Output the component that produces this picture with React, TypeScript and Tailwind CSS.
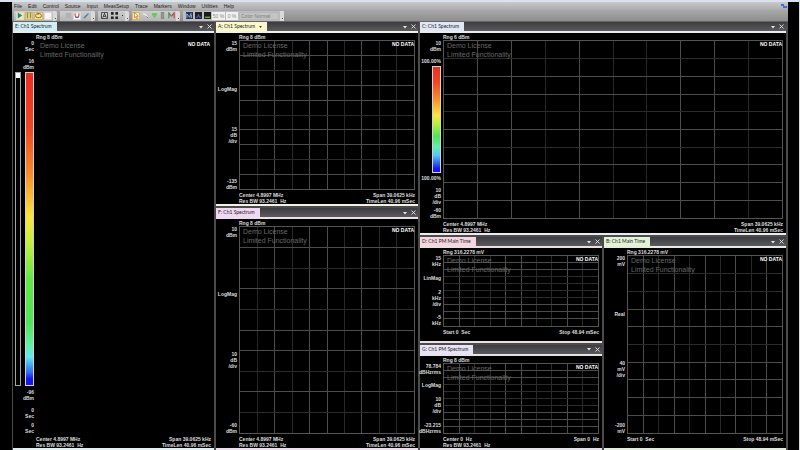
import type { ReactNode } from "react";

type Lines = string[];

function Label({ lines }: { lines: Lines }) {
  return (
    <div className="flex flex-col items-end">
      {lines.map((line, i) => (
        <span key={i}>{line}</span>
      ))}
    </div>
  );
}

function Graticule({ vBright, hBright }: { vBright: number[]; hBright: number[] }) {
  const ticks = [1, 2, 3, 4, 5, 6, 7, 8, 9];
  return (
    <svg className="block size-full" shapeRendering="crispEdges" aria-hidden="true">
      {ticks.map((t) => (
        <line key={"v" + t} x1={t * 10 + "%"} x2={t * 10 + "%"} y1="0" y2="100%" stroke={vBright.includes(t) ? "#4c4c4a" : "#292929"} />
      ))}
      {ticks.map((t) => (
        <line key={"h" + t} y1={t * 10 + "%"} y2={t * 10 + "%"} x1="0" x2="100%" stroke={hBright.includes(t) ? "#4c4c4a" : "#2c2c2a"} />
      ))}
    </svg>
  );
}

interface PanelProps {
  title: string;
  tab: string;
  line: string;
  range: string;
  gutter: ReactNode;
  footer: [string, string][];
  vBright?: number[];
  hBright?: number[];
  grid?: boolean;
  active?: boolean;
  className?: string;
}

function Panel({ title, tab, line, range, gutter, footer, vBright = [], hBright = [], grid = true, active, className = "" }: PanelProps) {
  return (
    <section className={"flex min-h-0 min-w-0 flex-col bg-black " + className}>
      <header className={"flex h-[11px] shrink-0 items-stretch justify-between border-b-2 bg-linear-to-b from-[#3c3c40] to-[#5b5b5e] " + line}>
        <h2 className={"flex items-center gap-1 px-[2px] pr-[5px] font-['Lato',sans-serif] text-[5px] leading-[9px] whitespace-pre text-[#222] " + tab}>
          {title}
          {active && (
            <svg viewBox="0 0 4 3" className="h-[2px] w-[3px]" fill="#333"><path d="M0 0h4L2 3z" /></svg>
          )}
        </h2>
        <div className="flex items-center gap-1 pr-[2px] text-[#e8e8e8]">
          <button aria-label={"Menu " + title} className="flex">
            <svg viewBox="0 0 4 4" className="size-[4px]" fill="currentColor"><path d="M0 1h4L2 3.4z" /></svg>
          </button>
          <button aria-label={"Close " + title} className="flex">
            <svg viewBox="0 0 5 5" className="size-[5px]" stroke="currentColor" strokeWidth="0.9"><path d="M.5.5l4 4M4.5.5l-4 4" /></svg>
          </button>
        </div>
      </header>
      <div className="flex min-h-0 flex-1 text-[5px] leading-[6px] font-bold whitespace-pre text-[#dedede]">
        <div className="flex w-[23px] shrink-0 flex-col items-end justify-between pt-[7px] pr-[2px] pb-[14px]">{gutter}</div>
        <div className="flex min-w-0 flex-1 flex-col pr-[3px]">
          <div className="h-[7px] shrink-0 leading-[8px]">{range}</div>
          <div className={"relative min-h-0 flex-1 " + (grid ? "border border-[#545454]" : "border border-black")}>
            {grid && <Graticule vBright={vBright} hBright={hBright} />}
            <p className="absolute top-0 left-[3px] text-[7px] leading-[9px] font-normal text-[#686868]">
              Demo License
              <br />
              Limited Functionality
            </p>
            <p className="absolute top-0 right-0 leading-[7px] text-white">NO DATA</p>
          </div>
          <footer className="h-[14px] shrink-0 pt-[2px]">
            {footer.map(([left, right]) => (
              <div key={left} className="flex justify-between">
                <span>{left}</span>
                <span>{right}</span>
              </div>
            ))}
          </footer>
        </div>
      </div>
      <div className={"shrink-0 border-b-2 " + line} />
    </section>
  );
}

const spectrumFooter: [string, string][] = [
  ["Center 4.8997 MHz", "Span 39.0625 kHz"],
  ["Res BW 93.2461  Hz", "TimeLen 40.96 mSec"],
];
const timeFooter: [string, string][] = [["Start 0  Sec", "Stop 48.94 mSec"]];

function stack(...groups: Lines[]) {
  return groups.map((g, i) => <Label key={i} lines={g} />);
}

const menus = ["File", "Edit", "Control", "Source", "Input", "MeasSetup", "Trace", "Markers", "Window", "Utilities", "Help"];

function Tool({ name, hot, width = "w-[8px]", children }: { name: string; hot?: string; width?: string; children: ReactNode }) {
  return (
    <button aria-label={name} className={"flex h-[8px] items-center justify-center " + width + " " + (hot ?? "")}>
      <svg viewBox="0 0 8 8" className="size-[7px]" fill="none">
        {children}
      </svg>
    </button>
  );
}

function ToolGroup({ pad = "pl-[2px]", children }: { pad?: string; children: ReactNode }) {
  return (
    <div className={"flex h-[10px] items-center gap-px rounded-r-[2px] bg-linear-to-b from-[#cdcdcd] to-[#b4b4b4] " + pad}>
      {children}
      <span className="flex h-full w-[4px] items-end justify-center rounded-r-[2px] bg-[#dadada] pb-[2px]">
        <i className="size-[1px] bg-[#555]" />
      </span>
    </div>
  );
}

const hotYellow = "border border-[#d9b860] bg-[#fbe6a0]";
const white = "border border-[#d8d8d8] bg-[#f7f7f7]";

function Toolbar() {
  return (
    <div className="flex h-[12px] shrink-0 items-center gap-[3px] border-b border-[#666] bg-linear-to-b from-[#a8a8a8] to-[#8e8e8e] px-[2px] font-['Liberation_Sans',Arial,sans-serif]">
      <ToolGroup>
        <Tool name="Run" hot="border border-[#e5dcae] bg-[#eee7b8]"><path d="M1 0l6 4-6 4z" fill="#237d9c" /></Tool>
        <Tool name="Pause" hot={hotYellow}><path d="M1 0h2v8H1zM5 0h2v8H5z" fill="#8b8746" /></Tool>
        <Tool name="Repeat" width="w-[9px]" hot={hotYellow}><rect x="0.7" y="2" width="6.6" height="4.4" rx="2" stroke="#806828" strokeWidth="1.1" /><path d="M3 .5L5 2 3 3.5z" fill="#806828" /></Tool>
        <Tool name="Single" hot={white}><path d="M6 6h1v1H6z" fill="#bbb" /></Tool>
      </ToolGroup>
      <ToolGroup pad="pl-[4px]">
        <Tool name="Record"><rect x="1" y="1" width="6" height="6" fill="#b2b2b2" /></Tool>
        <Tool name="Snap" hot={white}><path d="M1.5 1v3a2.5 2.5 0 005 0V1" stroke="#d44a58" strokeWidth="1.6" /><path d="M2 6.5h4" stroke="#3c65bb" strokeWidth="1.5" /></Tool>
        <Tool name="Calibrate"><path d="M1 7L6 2" stroke="#3a78a8" strokeWidth="1.6" /><path d="M5 1h2v2H5z" fill="#69b6df" /></Tool>
      </ToolGroup>
      <ToolGroup>
        <Tool name="Auto scale" width="w-[9px]"><rect x="0.7" y="0.7" width="6.6" height="6.6" stroke="#333" strokeWidth="1" fill="#ddd" /><path d="M2 6.5L4 1.5l2 5M3 5h2" stroke="#222" strokeWidth="1" /></Tool>
        <Tool name="Layout" width="w-[9px]"><path d="M0 0h3v3H0zM5 0h3v3H5zM0 5h3v3H0zM5 5h3v3H5z" fill="#222" /></Tool>
        <span className="flex w-[4px] justify-center"><i className="size-[1px] bg-[#333]" /></span>
      </ToolGroup>
      <ToolGroup pad="pl-0">
        <Tool name="Pointer" hot={hotYellow}><path d="M2 0l5 5H4.500L6 8 4.500 8 3.300 5.500 2 7z" fill="#fff" stroke="#725a24" strokeWidth=".7" /></Tool>
        <Tool name="Marker"><path d="M1 2l3 1 3 4" stroke="#eee" strokeWidth="1.5" /><path d="M5 5l2 2" stroke="#666" /></Tool>
        <Tool name="Peak"><path d="M4 7L1 3V1h6v2z" fill="#64ce57" /></Tool>
        <Tool name="Band" width="w-[7px]"><rect x="2.500" y="0.500" width="3" height="7" fill="#969696" stroke="#7a7a7a" strokeWidth=".7" /></Tool>
        <Tool name="Zoom"><path d="M1 7V1l3 4" stroke="#4a9555" strokeWidth="1.4" /><path d="M4 5l3-4v6" stroke="#c54456" strokeWidth="1.4" /></Tool>
      </ToolGroup>
      <div className="flex h-[10px] items-center gap-px rounded-r-[2px] bg-[#bdbdbd] pl-[2px]">
        <Tool name="Spectrogram"><path d="M0 0h8v8H0z" fill="#202a66" /><path d="M1 7V2l3 4 2-5" stroke="#80d0e8" strokeWidth="1" /><path d="M6 3v4" stroke="#e5dd53" /></Tool>
        <Tool name="Persistence"><path d="M0 0h8v8H0z" fill="#202020" /><path d="M1 6h2l1-3 1 3h2" stroke="#4b82dc" /></Tool>
        <Tool name="Density"><path d="M0 0h8v8H0z" fill="#1c1c1c" /><path d="M1 6h6" stroke="#8bb246" strokeWidth="1.400" /></Tool>
        <input aria-label="Persistence level" defaultValue="50 %" className="h-[8px] w-[13px] bg-[#f0f0f0] text-center text-[5px] leading-[8px] text-[#888]" />
        <input aria-label="Threshold" defaultValue="0 %" className="h-[8px] w-[12px] bg-[#f0f0f0] text-center text-[5px] leading-[8px] text-[#888]" />
        <select aria-label="Color map" className="h-[8px] w-[40px] appearance-none border border-[#b6b6b6] bg-[#c4c4c4] pl-[1px] text-[5px] leading-[6px] text-[#7a7a7a]">
          <option>Color Normal</option>
        </select>
        <span className="flex h-full w-[4px] items-end justify-center bg-[#dadada] pb-[2px]"><i className="size-[1px] bg-[#555]" /></span>
      </div>
    </div>
  );
}

const eGutter = (
  <div className="-mr-[2px] flex min-h-0 w-[23px] flex-1 flex-col items-end pr-[2px]">
    <Label lines={["0", "Sec"]} />
    <div className="mt-[6px]"><Label lines={["16", "dBm"]} /></div>
    <div className="mt-[2px] flex min-h-0 w-full flex-1 justify-between pl-[2px]">
      <input
        type="range"
        aria-label="Color scale"
        defaultValue={0}
        className="m-0 h-full w-[6px] appearance-none border border-[#a5a5a5] bg-black [writing-mode:vertical-lr] [&::-webkit-slider-thumb]:h-[5px] [&::-webkit-slider-thumb]:w-[4px] [&::-webkit-slider-thumb]:appearance-none [&::-webkit-slider-thumb]:bg-white"
      />
      <div className="w-[9px] border border-[#d8d0d0] bg-[linear-gradient(to_bottom,#ea2f22_0%,#ee4423_17%,#f58a2c_32%,#f9e63c_46%,#c5f13c_54%,#62e646_66%,#4fe456_80%,#5ff0a0_87%,#62e8f0_91%,#3f9df2_94%,#2f6ff0_96%,#1616ee_98%)]" />
    </div>
    <div className="mt-[3px]"><Label lines={["-96", "dBm"]} /></div>
    <div className="mt-[6px]"><Label lines={["0", "Sec"]} /></div>
    <div className="mt-[3px]"><Label lines={["0", "Sec"]} /></div>
  </div>
);

const cGutter = (
  <div className="flex min-h-0 flex-1 flex-col items-end">
    <Label lines={["10", "dBm"]} />
    <span className="mt-[6px]">100.00%</span>
    <div className="my-[2px] min-h-0 w-[9px] flex-1 border border-[#d8d0d0] bg-[linear-gradient(to_bottom,#ea2f22_0%,#ee4a25_15%,#f58a2c_30%,#f9e63c_46%,#b9f03c_54%,#4fe456_66%,#5ff0b0_76%,#56c8f2_84%,#2f6ff0_91%,#1616ee_97%)]" />
    <span>100.00%</span>
    <div className="mt-[6px]"><Label lines={["10", "dB", "/div"]} /></div>
    <div className="mt-[2px]"><Label lines={["-60", "dBm"]} /></div>
  </div>
);

export default function App() {
  return (
    <div className="flex h-screen flex-col border-r border-[#d5d9df] bg-black font-['Liberation_Sans',Arial,sans-serif]">
      <div className="h-[2px] shrink-0 bg-[#d9e2ef]" />
      <div className="mr-[11px] ml-[12px] flex min-h-0 flex-1 flex-col bg-[#4b4b4b]">
        <nav className="flex h-[8px] shrink-0 items-center bg-linear-to-b from-[#c9c9c9] to-[#acacac] pl-[2px] text-[5px] leading-[8px] text-[#222]">
          <div className="flex flex-1 gap-[6px]">
            {menus.map((m) => (
              <button key={m}>{m}</button>
            ))}
          </div>
          <svg viewBox="0 0 6 4" className="mr-[1px] h-[4px] w-[6px]" fill="#3f6fe0"><path d="M0 0h3v2h3v2H2V2H0z" /></svg>
        </nav>
        <Toolbar />
        <main className="grid min-h-0 flex-1 grid-cols-[201fr_202fr_366fr] gap-[2px] pr-[2px] pl-[1px]">
          <Panel
            title="E: Ch1 Spectrum"
            tab="bg-[#d3edf5]"
            line="border-[#e4eff1]"
            range="Rng 8 dBm"
            grid={false}
            gutter={eGutter}
            footer={spectrumFooter}
          />
          <div className="grid min-h-0 min-w-0 grid-rows-[184fr_242fr] gap-[2px]">
            <Panel
              title="A: Ch1 Spectrum"
              active
              tab="bg-[#fbf8cc]"
              line="border-[#f1f1e4]"
              range="Rng 8 dBm"
              vBright={[2, 4, 5, 7]}
              hBright={[1, 3, 4, 6, 7, 9]}
              gutter={stack(["15", "dBm"], ["LogMag"], ["15", "dB", "/div"], ["-135", "dBm"])}
              footer={spectrumFooter}
            />
            <Panel
              title="F: Ch1 Spectrum"
              tab="bg-[#f0d8f3]"
              line="border-[#eadfeb]"
              range="Rng 8 dBm"
              vBright={[2, 4, 5, 7]}
              hBright={[1, 3, 5, 6, 8]}
              gutter={stack(["10", "dBm"], ["LogMag"], ["10", "dB", "/div"], ["-60", "dBm"])}
              footer={spectrumFooter}
            />
          </div>
          <div className="grid min-h-0 min-w-0 grid-rows-2 gap-[2px]">
            <Panel
              title="C: Ch1 Spectrum"
              tab="bg-[#e1e7f5]"
              line="border-[#e9ebee]"
              range="Rng 6 dBm"
              vBright={[1, 2, 4, 7, 8]}
              hBright={[2, 3, 5, 7, 8, 9]}
              gutter={cGutter}
              footer={spectrumFooter}
            />
            <div className="grid min-h-0 min-w-0 grid-cols-2 gap-[2px]">
              <div className="grid min-h-0 min-w-0 grid-rows-2 gap-[2px]">
                <Panel
                  title="D: Ch1 PM Main Time"
                  tab="bg-[#f5d5df]"
                  line="border-[#ecdde1]"
                  range="Rng 316.2278 mV"
                  vBright={[1, 4, 5, 8]}
                  hBright={[1, 2, 7, 8, 9]}
                  gutter={stack(["15", "kHz"], ["LinMag"], ["2", "kHz", "/div"], ["-5", "kHz"])}
                  footer={timeFooter}
                />
                <Panel
                  title="G: Ch1 PM Spectrum"
                  tab="bg-[#e8e2f5]"
                  line="border-[#e6e2ea]"
                  range="Rng 8 dBm"
                  vBright={[1, 4, 5, 8]}
                  hBright={[1, 2, 7, 8, 9]}
                  gutter={stack(["78.784", "dBHzrms"], ["LogMag"], ["10", "dB", "/div"], ["-23.215", "dBHzrms"])}
                  footer={[["Center 0  Hz", "Span 0  Hz"], ["Res BW 93.2461  Hz", ""]]}
                />
              </div>
              <Panel
                title="B: Ch1 Main Time"
                tab="bg-[#e2f3d8]"
                line="border-[#e3ecdf]"
                range="Rng 316.2278 mV"
                vBright={[1, 3, 5, 7, 9]}
                hBright={[3, 4, 6, 7, 8, 9]}
                gutter={stack(["200", "mV"], ["Real"], ["40", "mV", "/div"], ["-200", "mV"])}
                footer={timeFooter}
              />
            </div>
          </div>
        </main>
      </div>
    </div>
  );
}
